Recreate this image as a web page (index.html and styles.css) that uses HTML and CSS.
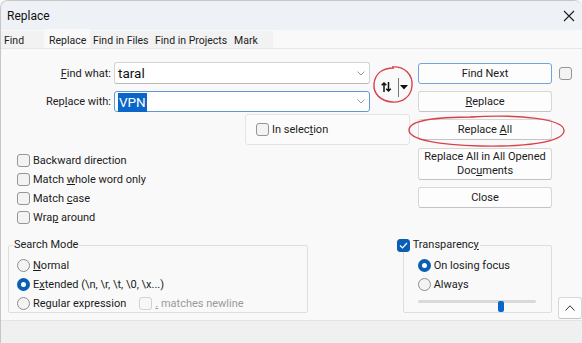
FILE: index.html
```html
<!DOCTYPE html>
<html lang="en">
<head>
  <meta charset="UTF-8">
  <title>Replace</title>
  <link rel="stylesheet" href="styles.css">
</head>
<body>
  <div class="window">
    <div class="titlebar">
      <span class="title">Replace</span>
      <svg class="close-x" width="12" height="12" viewBox="0 0 12 12">
        <path d="M1 1 L11 11 M11 1 L1 11" stroke="#1c1c1c" stroke-width="1.1" fill="none"/>
      </svg>
    </div>

    <div class="tabs">
      <div class="tab t-find">Find</div>
      <div class="tab t-replace active">Replace</div>
      <div class="tab t-files">Find in Files</div>
      <div class="tab t-projects">Find in Projects</div>
      <div class="tab t-mark">Mark</div>
    </div>

    <div class="content">
      <div class="upper">
        <div class="form">
          <div class="fields">
            <label class="field-label"><u>F</u>ind what:</label>
            <div class="combo">
              <span class="combo-text">taral</span>
              <svg class="chevron" width="8" height="5" viewBox="0 0 8 5"><path d="M0.5 0.5 L4 4 L7.5 0.5" stroke="#9a9a9a" fill="none"/></svg>
            </div>
            <div class="swap">
              <svg width="38" height="24" viewBox="0 0 38 24">
                <path d="M11 17 V8 M8.7 10.3 L11 8 L13.3 10.3" stroke="#111" stroke-width="1.5" fill="none"/>
                <path d="M15.5 7 V16 M13.2 13.7 L15.5 16 L17.8 13.7" stroke="#111" stroke-width="1.5" fill="none"/>
                <path d="M25.5 3 V22" stroke="#777" stroke-width="1"/>
                <path d="M27 10 H35 L31 14.5 Z" fill="#111"/>
              </svg>
            </div>
            <label class="field-label">Rep<u>l</u>ace with:</label>
            <div class="combo focused">
              <span class="combo-text"><span class="selected-text">VPN</span></span>
              <svg class="chevron" width="8" height="5" viewBox="0 0 8 5"><path d="M0.5 0.5 L4 4 L7.5 0.5" stroke="#9a9a9a" fill="none"/></svg>
            </div>
          </div>

          <div class="selection-box">
            <span class="checkbox"></span>
            <span>In selec<u>t</u>ion</span>
          </div>

          <div class="options">
            <div class="option"><span class="checkbox"></span><span>Backward direction</span></div>
            <div class="option"><span class="checkbox"></span><span>Match <u>w</u>hole word only</span></div>
            <div class="option"><span class="checkbox"></span><span>Match <u>c</u>ase</span></div>
            <div class="option"><span class="checkbox"></span><span>Wra<u>p</u> around</span></div>
          </div>
        </div>

        <div class="actions">
          <button class="btn default">Find Next</button>
          <button class="btn"><u>R</u>eplace</button>
          <button class="btn">Replace <u>A</u>ll</button>
          <button class="btn tall">Replace All in All Opened<br>Doc<u>u</u>ments</button>
          <button class="btn">Close</button>
        </div>

        <span class="checkbox extra-check"></span>
      </div>

      <div class="lower">
        <fieldset class="group search-mode">
          <legend>Search Mode</legend>
          <div class="option"><span class="radio"></span><span><u>N</u>ormal</span></div>
          <div class="option"><span class="radio on"></span><span>E<u>x</u>tended (\n, \r, \t, \0, \x...)</span></div>
          <div class="option">
            <span class="radio"></span><span>Regular expression</span>
            <span class="checkbox disabled"></span><span class="muted"><u>.</u> matches newline</span>
          </div>
        </fieldset>

        <fieldset class="group transparency">
          <legend>
            <span class="checkbox checked">
              <svg width="9" height="7" viewBox="0 0 9 7"><path d="M1 3.5 L3.5 6 L8 1" stroke="#fff" stroke-width="1.2" fill="none"/></svg>
            </span>
            <span>Transparenc<u>y</u></span>
          </legend>
          <div class="option"><span class="radio on"></span><span>On losing focus</span></div>
          <div class="option"><span class="radio"></span><span>Always</span></div>
          <div class="slider">
            <div class="track"></div>
            <div class="thumb"></div>
          </div>
        </fieldset>

        <button class="btn mini">
          <svg width="10" height="6" viewBox="0 0 10 6"><path d="M0.5 5.5 L5 0.8 L9.5 5.5" stroke="#333" fill="none"/></svg>
        </button>
      </div>
    </div>

    <div class="footer"></div>

    <!-- red marks drawn over the screenshot -->
    <svg class="marks" width="582" height="343" viewBox="0 0 582 343">
      <path d="M392 67 C405 66 413 75 412 86 C411 97 402 103 392 102 C381 101 373 94 374 84 C375 74 382 68 394 68" stroke="#d8424c" stroke-width="1.4" fill="none"/>
      <path d="M470 117 C520 114 565 119 564 131 C563 143 520 147 480 146 C440 145 409 140 409 130 C409 121 430 117 475 117" stroke="#d8424c" stroke-width="1.4" fill="none"/>
    </svg>
  </div>
</body>
</html>
```

FILE: styles.css
```css
* {
  box-sizing: border-box;
}
body {
  margin: 0;
  font-family: Roboto, "Liberation Sans", sans-serif;
  font-size: 11px;
  color: #1b1b1b;
  background-color: #f9f9f9;
}
u {
  text-decoration-thickness: 1px;
  text-underline-offset: 1px;
}
.window {
  position: relative;
  width: 582px;
  height: 343px;
  overflow: hidden;
  background-color: #f9f9f9;
  border-top: 1px solid #c4c6c9;
  border-left: 1px solid #c4c6c9;
  border-radius: 8px 8px 0 0;
}

/* title bar */
.titlebar {
  height: 29px;
  background-color: #eef2f7;
  display: flex;
  align-items: center;
  justify-content: space-between;
  padding: 0 7px 0 6px;
}
.title {
  font-size: 12px;
  color: #111;
}
.close-x {
  margin-top: 1px;
}

/* tabs */
.tabs {
  height: 19px;
  display: flex;
  align-items: flex-end;
  border-bottom: 1px solid #e6e6e6;
}
.tab {
  height: 17px;
  line-height: 15px;
  font-size: 10.5px;
  padding: 2px 0 0 3px;
  background-color: #f2f2f2;
  color: #222;
}
.t-find {
  width: 43px;
  padding-left: 3px;
}
.t-replace {
  width: 46px;
  padding-left: 5px;
}
.t-files {
  width: 62px;
}
.t-projects {
  width: 79px;
}
.t-mark {
  width: 42px;
}
.tab.active {
  height: 19px;
  padding-top: 4px;
  background-color: #f9f9f9;
}

/* main area */
.content {
  height: 271px;
}
.upper {
  display: flex;
  align-items: flex-start;
  padding-top: 13px;
  height: 189px;
}
.form {
  width: 409px;
}
.fields {
  display: grid;
  grid-template-columns: 110px 256px 38px;
  grid-template-rows: 22px 21px;
  column-gap: 3px;
  row-gap: 7px;
}
.field-label {
  text-align: right;
  align-self: center;
  color: #222;
}
.combo {
  display: flex;
  align-items: center;
  justify-content: space-between;
  background-color: #fff;
  border: 1px solid #d3d3d3;
  border-bottom-color: #b8b8b8;
  border-radius: 3px;
  padding: 0 4px 0 3px;
}
.combo.focused {
  border-color: #5f98d6;
}
.combo-text {
  font-size: 13.5px;
  color: #111;
}
.selected-text {
  background-color: #0a66c8;
  color: #fff;
  padding: 1px 1px 2px 1px;
}
.swap {
  grid-column: 3;
  grid-row: 1 / 3;
  margin-top: 13px;
  height: 24px;
}
.selection-box {
  display: flex;
  align-items: center;
  gap: 3px;
  margin: 2px 0 0 244px;
  width: 165px;
  height: 31px;
  padding-left: 10px;
  border: 1px solid #e4e4e4;
  border-radius: 3px;
  background-color: #fbfbfb;
}
.options {
  margin-top: 6px;
  padding-left: 16px;
}
.option {
  display: flex;
  align-items: center;
  gap: 3px;
  height: 19px;
}
.checkbox {
  display: inline-flex;
  align-items: center;
  justify-content: center;
  width: 13px;
  height: 13px;
  flex: none;
  border: 1px solid #959595;
  border-radius: 3px;
  background-color: #f3f3f3;
}
.checkbox.checked {
  border-color: #0a5fb4;
  background-color: #0a5fb4;
}
.checkbox.disabled {
  border-color: #d2d2d2;
  background-color: #f7f7f7;
  margin-left: 10px;
}
.muted {
  color: #9a9a9a;
}
.radio {
  width: 13px;
  height: 13px;
  flex: none;
  border: 1px solid #8e8e8e;
  border-radius: 50%;
  background-color: #f3f3f3;
}
.radio.on {
  border: 4px solid #0a5fb4;
  background-color: #fff;
}

/* right column */
.actions {
  margin-left: 8px;
  width: 134px;
  display: flex;
  flex-direction: column;
  gap: 7px;
  padding-top: 1px;
}
.btn {
  font-family: inherit;
  font-size: 11px;
  color: #1b1b1b;
  height: 21px;
  padding: 0 4px;
  background-color: #fdfdfd;
  border: 1px solid #d7d7d7;
  border-bottom-color: #c3c3c3;
  border-radius: 3px;
  line-height: 14px;
}
.btn.default {
  border-color: #73a3d9;
}
.btn.tall {
  height: 32px;
  margin-top: 1px;
  padding: 0 1px;
  white-space: nowrap;
}
.extra-check {
  margin: 5px 0 0 7px;
}

/* bottom groups */
.lower {
  display: flex;
  align-items: flex-start;
}
.group {
  margin: 0;
  border: 1px solid #dedede;
  border-radius: 2px;
  padding: 4px 0 0 4px;
  height: 75px;
}
.group legend {
  padding: 0 1px;
  line-height: 14px;
  height: 14px;
  color: #222;
}
.search-mode {
  margin-left: 7px;
  width: 301px;
}
.search-mode .option {
  padding-left: 4px;
}
.transparency {
  margin-left: 95px;
  width: 150px;
  padding-left: 14px;
}
.transparency legend {
  display: flex;
  align-items: center;
  gap: 3px;
  margin-left: -21px;
  padding: 0 1px 0 0;
}
.slider {
  position: relative;
  width: 118px;
  height: 16px;
}
.track {
  margin-top: 6px;
  height: 3px;
  background-color: #d9d9d9;
  border-radius: 2px;
}
.thumb {
  position: absolute;
  left: 80px;
  top: 1px;
  width: 6px;
  height: 11px;
  border-radius: 2px;
  background-color: #0a66c8;
}
.btn.mini {
  width: 24px;
  height: 22px;
  margin: 59px 0 0 6px;
  display: flex;
  align-items: center;
  justify-content: center;
  padding: 0;
}

.footer {
  height: 24px;
  border-top: 1px solid #e4e4e4;
  background-color: #f0f0f0;
}

.marks {
  position: absolute;
  left: -1px;
  top: -1px;
  pointer-events: none;
}
```
